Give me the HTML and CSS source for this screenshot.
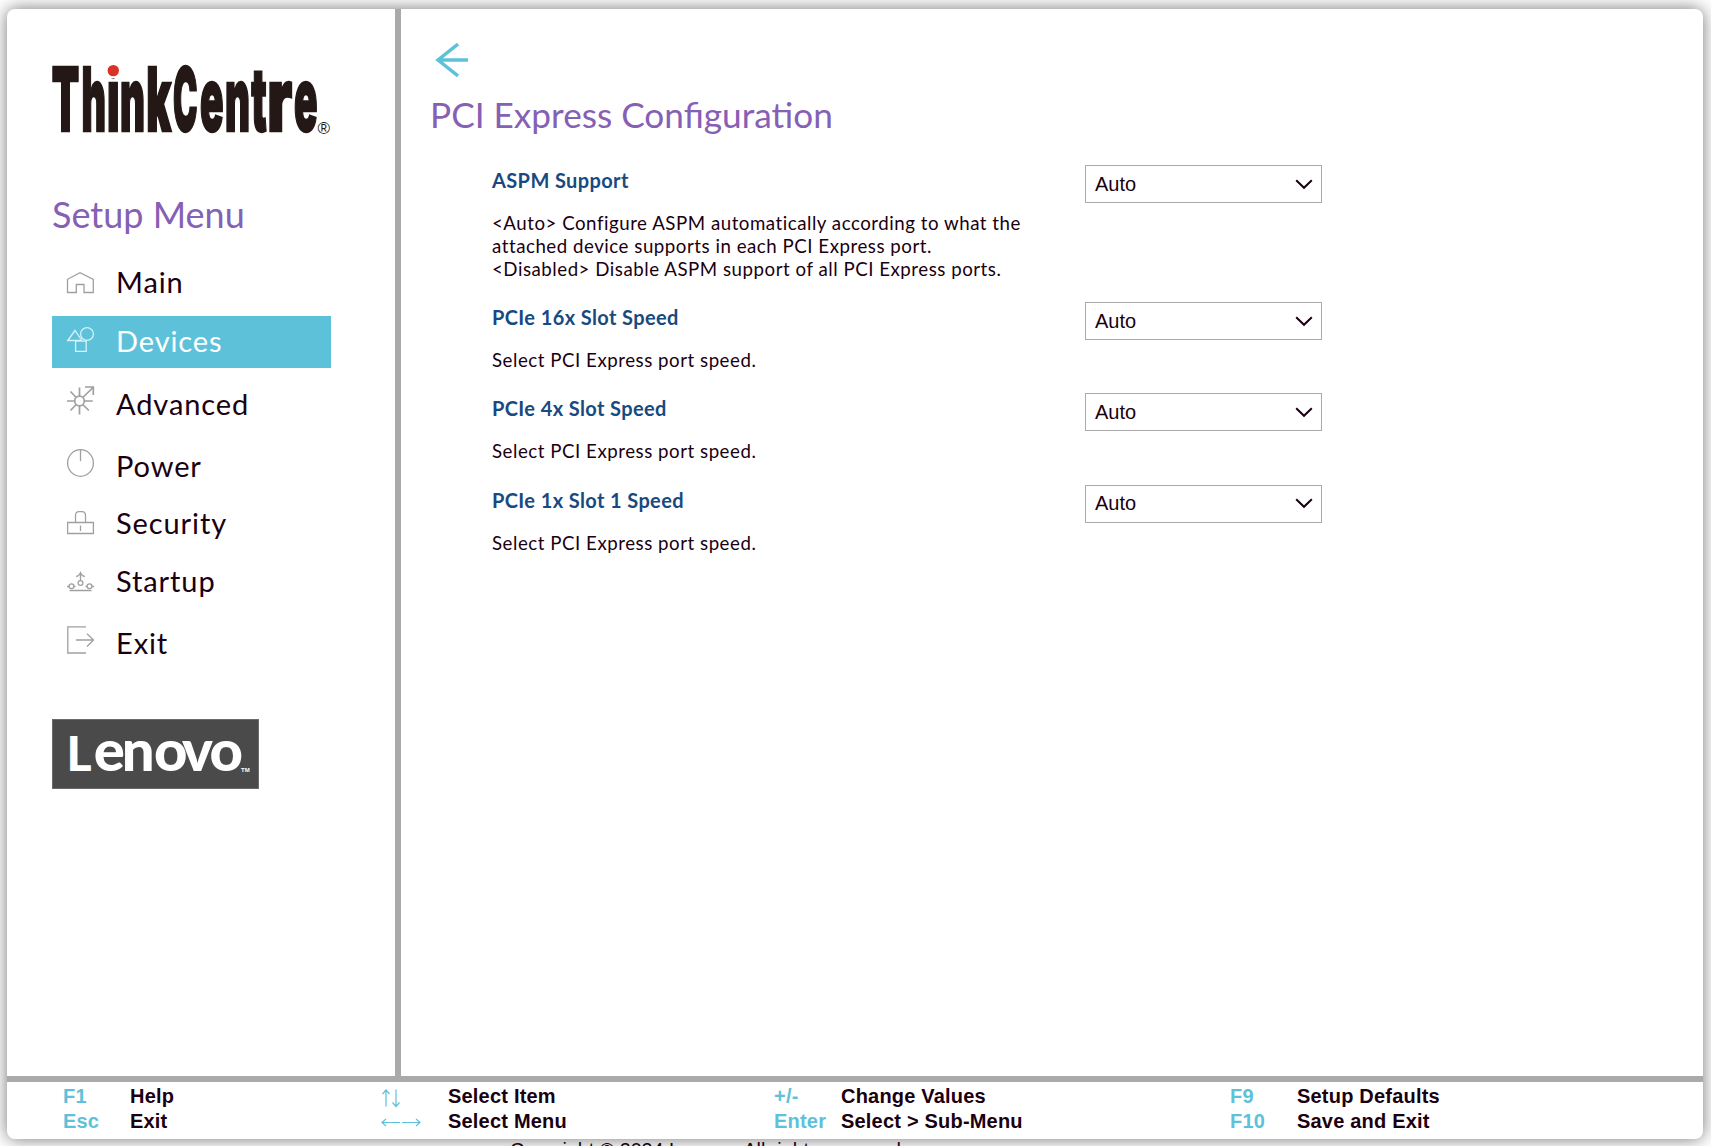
FILE: index.html
```html
<!DOCTYPE html>
<html lang="en">
<head>
<meta charset="utf-8">
<title>PCI Express Configuration</title>
<link rel="stylesheet" href="styles.css">
</head>
<body>
<div class="window">
  <div class="panes">
    <aside class="sidebar">
      <svg class="brand" width="282" height="76" viewBox="50 62 282 76" role="img" aria-label="ThinkCentre">
        <text class="brand-name" y="131.2"><tspan x="51.8" textLength="27.500" lengthAdjust="spacingAndGlyphs">T</tspan><tspan x="81.500" textLength="24.500" lengthAdjust="spacingAndGlyphs">h</tspan><tspan x="107" textLength="12.500" lengthAdjust="spacingAndGlyphs">i</tspan><tspan x="120" textLength="25" lengthAdjust="spacingAndGlyphs">n</tspan><tspan x="146.200" textLength="25" lengthAdjust="spacingAndGlyphs">k</tspan><tspan x="173" textLength="24.500" lengthAdjust="spacingAndGlyphs">C</tspan><tspan x="200" textLength="23.500" lengthAdjust="spacingAndGlyphs">e</tspan><tspan x="225" textLength="25" lengthAdjust="spacingAndGlyphs">n</tspan><tspan x="251.200" textLength="15.500" lengthAdjust="spacingAndGlyphs">t</tspan><tspan x="267.200" textLength="25" lengthAdjust="spacingAndGlyphs">r</tspan><tspan x="294" textLength="23.500" lengthAdjust="spacingAndGlyphs">e</tspan></text>
        <rect x="106" y="58" width="14" height="20.500" fill="#fff"/>
        <circle cx="113.3" cy="70.6" r="5.7" fill="#d93328"/>
        <text class="brand-mark" x="317.5" y="133.5">®</text>
      </svg>
      <h2 class="menu-title">Setup Menu</h2>
      <nav class="menu">
        <a class="item"><svg width="27" height="21" viewBox="0 0 27 21"><path d="M.5 20.5V7.3L13 .7l13.3 6.6v13.2H17v-8H9.300v8z"/></svg><span>Main</span></a>
        <a class="item active"><svg width="27" height="25" viewBox="0 0 27 25"><circle cx="20" cy="7" r="6.400"/><path d="M.8 13.500L8 3.500l6.800 10zM8.600 14.200h10.600v10.200H8.600z"/></svg><span>Devices</span></a>
        <a class="item"><svg class="heavy" width="27" height="29" viewBox="0 0 27 29"><circle cx="12.500" cy="15" r="4.800"/><path d="M12.500 1.500v8.700M12.500 20v8.500M0 15h7.600M17.300 15h8.500M3.500 5.500l5.700 6M15.800 18.500l6 6M3.500 24.500l5.700-6M15.800 11.500L26 1.500M18 1h8.300v8"/></svg><span>Advanced</span></a>
        <a class="item"><svg width="27" height="28" viewBox="0 0 27 28"><ellipse cx="13.500" cy="14" rx="12.900" ry="13.300"/><path d="M13.500.700v11.500"/></svg><span>Power</span></a>
        <a class="item"><svg width="27" height="23" viewBox="0 0 27 23"><path d="M.6 11.500h25.800v11H.6zM8.500 11.500V4.500q0-3.900 3.500-3.900h3q3.500 0 3.500 3.900v7M13.500 14.500v5.500"/></svg><span>Security</span></a>
        <a class="item"><svg width="27" height="20" viewBox="0 0 27 20"><path d="M2.500 18.500h22M13.500 1v7.500M9.200 4.500q3-.5 4.300-3.700 1.300 3.200 4.300 3.700M0 14.500h2M7 14.500h1.500M18.500 14.500H20M25 14.500h2"/><circle cx="4.500" cy="14.200" r="2.400"/><circle cx="13.500" cy="11" r="2.400"/><circle cx="22.500" cy="14.200" r="2.400"/></svg><span>Startup</span></a>
        <a class="item"><svg width="27" height="28" viewBox="0 0 27 28"><path d="M19 .800H.800v26.200H19M9 14h17.500M20 7.800l6.500 6.200-6.500 6.500"/></svg><span>Exit</span></a>
      </nav>
      <svg class="maker" width="207" height="70" viewBox="52 719 207 70" role="img" aria-label="Lenovo">
        <rect x="52.500" y="719.500" width="206" height="69" fill="#4a4a4a" stroke="#6a6a6a"/>
        <text class="maker-name" y="770.500" x="66.500 93.700 121.800 154 182 209.500"><tspan class="cap">L</tspan>enovo</text>
        <text class="maker-mark" x="241" y="772">TM</text>
      </svg>
    </aside>
    <main class="content">
      <svg class="back" width="34" height="34" viewBox="0 0 34 34"><path d="M33 17H3M23 1.200L3 17l20 15.800"/></svg>
      <h1 class="title">PCI Express Configuration</h1>
      <section class="options">
        <div class="option tall">
          <div><h3>ASPM Support</h3><p>&lt;Auto&gt; Configure ASPM automatically according to what the<br>attached device supports in each PCI Express port.<br>&lt;Disabled&gt; Disable ASPM support of all PCI Express ports.</p></div>
          <div class="select"><span>Auto</span><svg width="18" height="11" viewBox="0 0 18 11"><path d="M1.200 1.200L9 8.800l7.800-7.600"/></svg></div>
        </div>
        <div class="option">
          <div><h3>PCIe 16x Slot Speed</h3><p>Select PCI Express port speed.</p></div>
          <div class="select"><span>Auto</span><svg width="18" height="11" viewBox="0 0 18 11"><path d="M1.200 1.200L9 8.800l7.800-7.600"/></svg></div>
        </div>
        <div class="option">
          <div><h3>PCIe 4x Slot Speed</h3><p>Select PCI Express port speed.</p></div>
          <div class="select"><span>Auto</span><svg width="18" height="11" viewBox="0 0 18 11"><path d="M1.200 1.200L9 8.800l7.800-7.600"/></svg></div>
        </div>
        <div class="option">
          <div><h3>PCIe 1x Slot 1 Speed</h3><p>Select PCI Express port speed.</p></div>
          <div class="select"><span>Auto</span><svg width="18" height="11" viewBox="0 0 18 11"><path d="M1.200 1.200L9 8.800l7.800-7.600"/></svg></div>
        </div>
      </section>
    </main>
  </div>
  <footer class="keys">
    <dl><dt>F1</dt><dd>Help</dd><dt>Esc</dt><dd>Exit</dd></dl>
    <dl>
      <dt><svg width="40" height="25" viewBox="0 0 40 25" role="img" aria-label="Up and down"><path d="M5 22.500V6.500M1.500 10L5 6l3.500 4M15 5.500v16.500M11.500 18.500l3.500 4 3.500-4"/></svg></dt><dd>Select Item</dd>
      <dt><svg width="40" height="25" viewBox="0 0 40 25" role="img" aria-label="Left and right"><path d="M19 13.500H1.500M5 10l-4 3.500L5 17M21 13.500h17.500M35 10l4 3.500-4 3.500"/></svg></dt><dd>Select Menu</dd>
    </dl>
    <dl><dt>+/-</dt><dd>Change Values</dd><dt>Enter</dt><dd>Select &gt; Sub-Menu</dd></dl>
    <dl><dt>F9</dt><dd>Setup Defaults</dd><dt>F10</dt><dd>Save and Exit</dd></dl>
  </footer>
</div>
<p class="copyright">Copyright © 2024 Lenovo. All rights reserved.</p>
</body>
</html>
```
FILE: styles.css
```css
* { box-sizing: border-box; }
body { margin: 0; height: 1146px; overflow: hidden; background: #fff; color: #1a0010; font-family: Lato, "Open Sans", sans-serif; }
h1, h2, h3, p, dl, dd { margin: 0; }
svg { display: block; fill: none; flex: none; overflow: visible; }

.window { width: 1696px; height: 1130px; margin: 9px 0 0 7px; border-radius: 8px; background: #fff; box-shadow: 0 0 17px rgba(0, 0, 0, .55); display: flex; flex-direction: column; }
.panes { display: flex; height: 1067px; }
.sidebar { width: 394px; padding: 53px 0 0 43px; border-right: 6px solid #aaa; flex: none; }
.content { flex: 1; padding: 34px 0 0 29px; }

.brand-name { font: 900 88px Inter, sans-serif; fill: #231815; stroke: #231815; stroke-width: 2.400; }
.brand-mark { font: 17px "Liberation Sans", sans-serif; fill: #231815; }
.menu-title { margin: 54px 0 0 2px; font-weight: 400; font-size: 36px; line-height: 44px; color: #8560b5; }

.menu { display: grid; grid-template-rows: 59px 63px 62px 57px 58px 62px 52px; margin: 21px 0 0 2px; width: 279px; }
.item { display: flex; align-items: baseline; height: 52px; padding: 7px 0 0 15px; font-size: 29px; line-height: 36px; letter-spacing: .9px; }
.item svg { stroke: #a0a0a0; stroke-width: 1.300; margin-right: 22px; }
.item svg.heavy { stroke-width: 1.700; }
.item.active { background: #5ec1da; color: #fff; }
.item.active svg { stroke: #d4f2fa; }

.maker { margin: 49px 0 0 2px; }
.maker-name { font: 900 58px Lato, sans-serif; fill: #fff; }
.maker-name .cap { font-size: 48px; }
.maker-mark { font: 700 6px "Liberation Sans", sans-serif; fill: #fff; }

.back { stroke: #5ec1da; stroke-width: 3.400; margin-left: 5px; }
.title { margin-top: 15px; font-weight: 400; font-size: 35.200px; line-height: 44px; color: #8560b5; }
.options { padding: 29px 0 0 62px; }
.option { display: grid; grid-template-columns: 593px 237px; align-items: start; height: 91.300px; }
.option.tall { height: 137px; }
.option h3 { font-size: 20px; line-height: 26px; color: #184a80; margin-top: 2px; letter-spacing: .38px; }
.option p { margin-top: 19px; font-size: 18.700px; line-height: 23px; letter-spacing: .52px; }
.select { display: flex; align-items: center; justify-content: space-between; height: 38px; padding: 0 8px 0 9px; border: 1px solid #aaa; font: 20px "Liberation Sans", sans-serif; }
.select svg { stroke: #1a0010; stroke-width: 2; }

.keys { border-top: 6px solid #aaa; display: grid; grid-template-columns: 318px 393px 456px 1fr; padding: 2px 0 0 56px; flex: 1; font: 700 20px/25px "Liberation Sans", sans-serif; letter-spacing: .2px; }
.keys dl { display: grid; grid-template-columns: 67px auto; grid-auto-rows: 25px; }
.keys dt { color: #5ec1da; }
.keys svg { stroke: #5ec1da; stroke-width: 1.200; }
.copyright { margin: 0 0 0 510px; font: 19.700px/23px "Liberation Sans", sans-serif; white-space: nowrap; }
```
